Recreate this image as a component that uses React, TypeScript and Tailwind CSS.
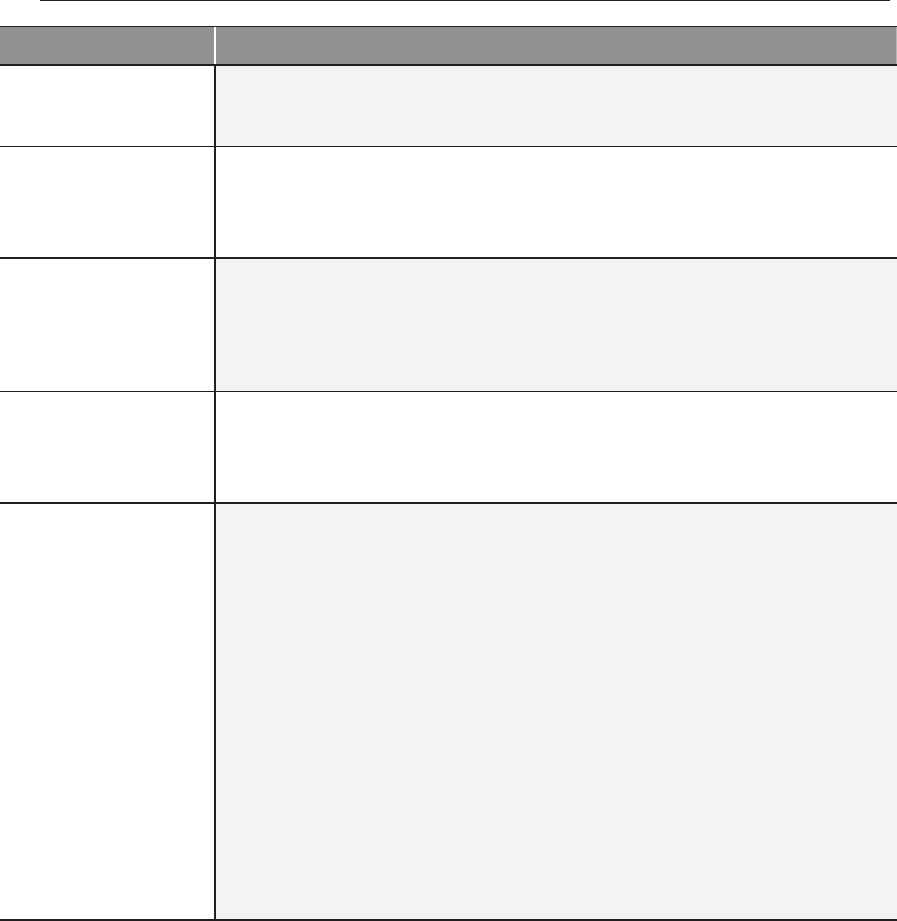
const rows = [
  { h: "h-[81px]", shaded: true, border: "border-b" },
  { h: "h-[112px]", shaded: false, border: "border-b-2" },
  { h: "h-[133px]", shaded: true, border: "border-b" },
  { h: "h-[112px]", shaded: false, border: "border-b-2" },
  { h: "h-[417px]", shaded: true, border: "border-b-2" },
];

export default function App() {
  return (
    <div className="flex h-[921px] w-[897px] flex-col bg-white">
      <div className="ml-[40px] h-px w-[850px] bg-[#231f20]" />
      <div className="mt-[25px] flex flex-col border-t border-[#231f20]">
        <div className="grid h-[39px] grid-cols-[214px_1fr] border-b-2 border-[#231f20] bg-[#929091]">
          <div />
          <div className="border-l-2 border-r border-l-white border-r-[#b8b6b7]" />
        </div>
        {rows.map((r, i) => (
          <div key={i} className={`grid shrink-0 grid-cols-[214px_1fr] border-[#231f20] ${r.h} ${r.border}`}>
            <div className="bg-white" />
            <div className={`border-l-2 border-[#231f20] ${r.shaded ? "bg-[#f3f3f3]" : "bg-white"}`} />
          </div>
        ))}
      </div>
    </div>
  );
}
